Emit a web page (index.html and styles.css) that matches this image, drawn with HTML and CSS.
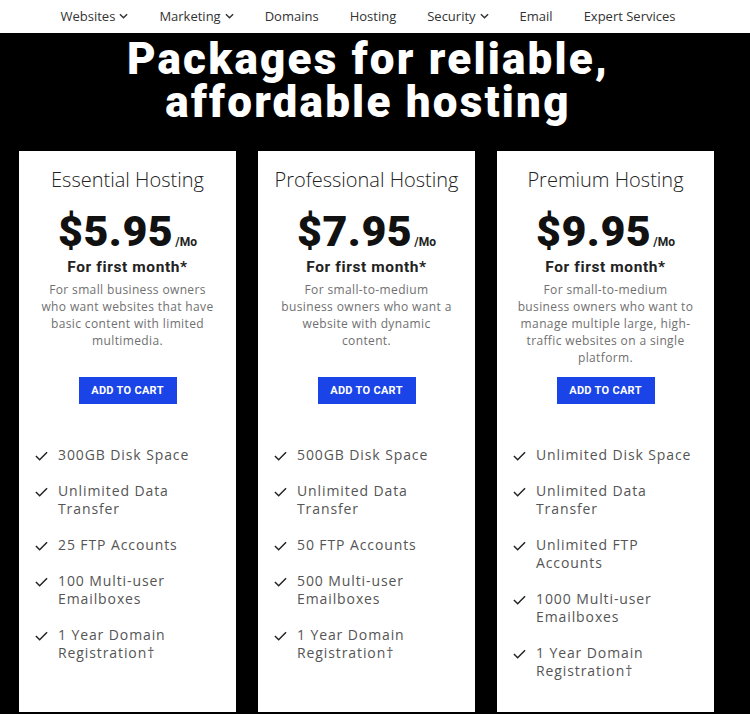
FILE: index.html
```html
<!DOCTYPE html>
<html>
<head>
<meta charset="utf-8">
<link rel="stylesheet" href="styles.css">
</head>
<body>
<nav class="nav">
  <span class="nav-item">Websites <svg class="chev" viewBox="0 0 10 6"><path d="M1 1l4 4 4-4"/></svg></span>
  <span class="nav-item">Marketing <svg class="chev" viewBox="0 0 10 6"><path d="M1 1l4 4 4-4"/></svg></span>
  <span class="nav-item">Domains</span>
  <span class="nav-item">Hosting</span>
  <span class="nav-item">Security <svg class="chev" viewBox="0 0 10 6"><path d="M1 1l4 4 4-4"/></svg></span>
  <span class="nav-item">Email</span>
  <span class="nav-item">Expert Services</span>
</nav>
<main class="hero">
  <h1 class="title"><span class="title-line">Packages for reliable,</span><span class="title-line">affordable hosting</span></h1>
  <div class="cards">
    <section class="card">
      <h2 class="plan">Essential Hosting</h2>
      <div class="price"><span class="amount">$5.95</span><span class="per">/Mo</span></div>
      <div class="first">For first month*</div>
      <p class="desc">For small business owners who want websites that have basic content with limited multimedia.</p>
      <button class="cart">ADD TO CART</button>
      <ul class="features">
        <li><svg class="check" viewBox="0 0 14 10"><path d="M1 5l4 4 8-8"/></svg><span>300GB Disk Space</span></li>
        <li><svg class="check" viewBox="0 0 14 10"><path d="M1 5l4 4 8-8"/></svg><span>Unlimited Data Transfer</span></li>
        <li><svg class="check" viewBox="0 0 14 10"><path d="M1 5l4 4 8-8"/></svg><span>25 FTP Accounts</span></li>
        <li><svg class="check" viewBox="0 0 14 10"><path d="M1 5l4 4 8-8"/></svg><span>100 Multi-user Emailboxes</span></li>
        <li><svg class="check" viewBox="0 0 14 10"><path d="M1 5l4 4 8-8"/></svg><span>1 Year Domain Registration†</span></li>
      </ul>
    </section>
    <section class="card">
      <h2 class="plan">Professional Hosting</h2>
      <div class="price"><span class="amount">$7.95</span><span class="per">/Mo</span></div>
      <div class="first">For first month*</div>
      <p class="desc">For small-to-medium business owners who want a website with dynamic content.</p>
      <button class="cart">ADD TO CART</button>
      <ul class="features">
        <li><svg class="check" viewBox="0 0 14 10"><path d="M1 5l4 4 8-8"/></svg><span>500GB Disk Space</span></li>
        <li><svg class="check" viewBox="0 0 14 10"><path d="M1 5l4 4 8-8"/></svg><span>Unlimited Data Transfer</span></li>
        <li><svg class="check" viewBox="0 0 14 10"><path d="M1 5l4 4 8-8"/></svg><span>50 FTP Accounts</span></li>
        <li><svg class="check" viewBox="0 0 14 10"><path d="M1 5l4 4 8-8"/></svg><span>500 Multi-user Emailboxes</span></li>
        <li><svg class="check" viewBox="0 0 14 10"><path d="M1 5l4 4 8-8"/></svg><span>1 Year Domain Registration†</span></li>
      </ul>
    </section>
    <section class="card">
      <h2 class="plan">Premium Hosting</h2>
      <div class="price"><span class="amount">$9.95</span><span class="per">/Mo</span></div>
      <div class="first">For first month*</div>
      <p class="desc">For small-to-medium business owners who want to manage multiple large, high-traffic websites on a single platform.</p>
      <button class="cart">ADD TO CART</button>
      <ul class="features">
        <li><svg class="check" viewBox="0 0 14 10"><path d="M1 5l4 4 8-8"/></svg><span>Unlimited Disk Space</span></li>
        <li><svg class="check" viewBox="0 0 14 10"><path d="M1 5l4 4 8-8"/></svg><span>Unlimited Data Transfer</span></li>
        <li><svg class="check" viewBox="0 0 14 10"><path d="M1 5l4 4 8-8"/></svg><span>Unlimited FTP Accounts</span></li>
        <li><svg class="check" viewBox="0 0 14 10"><path d="M1 5l4 4 8-8"/></svg><span>1000 Multi-user Emailboxes</span></li>
        <li><svg class="check" viewBox="0 0 14 10"><path d="M1 5l4 4 8-8"/></svg><span>1 Year Domain Registration†</span></li>
      </ul>
    </section>
  </div>
</main>
</body>
</html>
```
FILE: styles.css
```css
* { box-sizing: border-box; }
html, body { margin: 0; padding: 0; }
body {
  width: 750px;
  height: 714px;
  overflow: hidden;
  background: #000;
  font-family: "Open Sans", "Liberation Sans", sans-serif;
}
.nav {
  height: 33px;
  background: #fff;
  display: flex;
  justify-content: center;
  align-items: center;
  gap: 31px;
  padding: 0 14px 2px 0;
  font-size: 13px;
  color: #333;
}
.nav-item { display: flex; align-items: center; gap: 4px; white-space: nowrap; }
.chev { width: 9px; height: 6px; fill: none; stroke: #333; stroke-width: 1.6; }
.hero { padding-top: 5px; }
.title {
  margin: 0 14px 0 0;
  display: flex;
  flex-direction: column;
  align-items: center;
  color: #fff;
  font-family: Roboto, "Liberation Sans", sans-serif;
  font-weight: 900;
  font-size: 44px;
  letter-spacing: 2.2px;
}
.title-line { display: block; height: 43px; line-height: 43px; white-space: nowrap; }
.cards {
  display: flex;
  gap: 22px;
  padding-left: 19px;
  margin-top: 27px;
}
.card {
  width: 217px;
  height: 561px;
  background: #fff;
  display: flex;
  flex-direction: column;
  align-items: center;
  padding: 16px 14px 0;
}
.plan {
  margin: 0;
  font-family: "Open Sans", sans-serif;
  font-weight: 300;
  font-size: 20px;
  line-height: 26px;
  color: #222;
  white-space: nowrap;
}
.price { margin-top: 16px; display: flex; align-items: baseline; height: 44px; line-height: 44px; }
.amount {
  font-family: Roboto, sans-serif;
  font-weight: 900;
  font-size: 43px;
  color: #111;
  letter-spacing: 0.5px;
}
.per { font-family: Roboto, sans-serif; font-weight: 700; font-size: 12px; color: #222; margin-left: 2px; }
.first {
  margin-top: 5px;
  font-family: Roboto, sans-serif;
  font-weight: 700;
  font-size: 15.5px;
  color: #222;
  line-height: 18px;
  letter-spacing: 0.6px;
}
.desc {
  margin: 5px 0 0;
  width: 176px;
  height: 85px;
  text-align: center;
  font-size: 12px;
  line-height: 17px;
  color: #707070;
  letter-spacing: 0.37px;
}
.cart {
  margin-top: 11px;
  width: 98px;
  height: 27px;
  border: 0;
  background: #1a44e8;
  color: #fff;
  font-family: Roboto, sans-serif;
  font-weight: 700;
  font-size: 11px;
  letter-spacing: 0.3px;
  padding: 0;
}
.features {
  list-style: none;
  margin: 42px 0 0;
  padding: 0 0 0 2px;
  width: 100%;
  display: flex;
  flex-direction: column;
  gap: 18px;
}
.features li { display: flex; align-items: flex-start; gap: 10px; }
.check { width: 13px; height: 10px; margin-top: 5px; flex: none; fill: none; stroke: #222; stroke-width: 1.6; }
.features span {
  font-size: 14px;
  line-height: 18px;
  color: #555;
  letter-spacing: 0.9px;
}
```
